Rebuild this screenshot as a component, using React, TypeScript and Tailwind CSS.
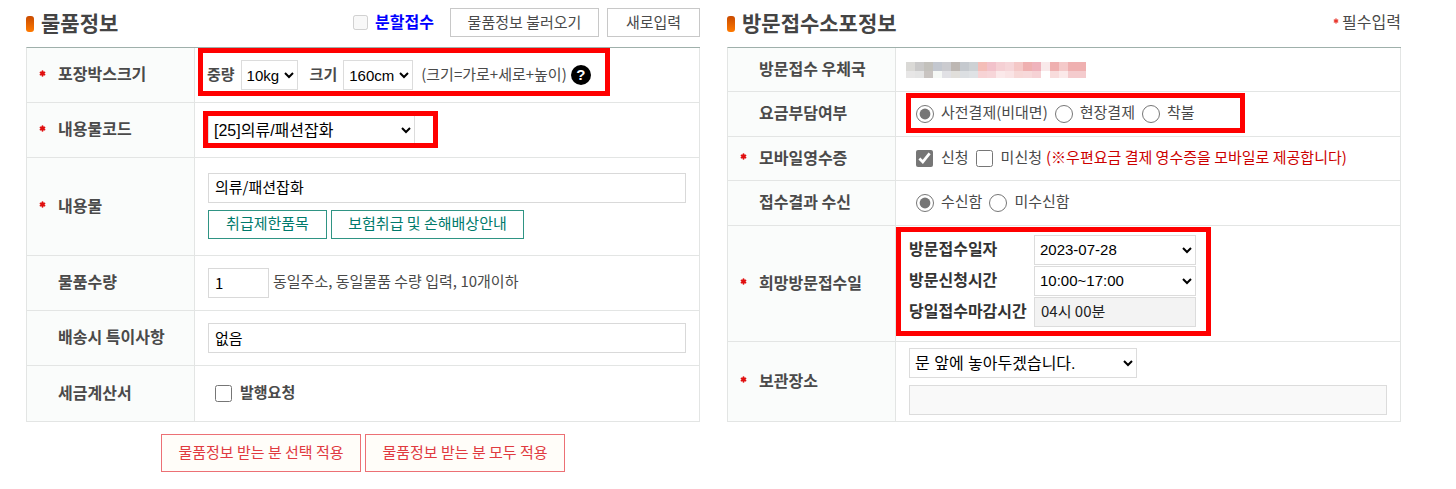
import type { ReactNode } from "react";
import { Asterisk } from "lucide-react";
import clsx from "clsx";

const FIELD =
  "h-[30px] border border-[#d9d9d9] bg-white px-1.5 pb-0.5 text-[15px] text-black";
const SELECT =
  "h-[30px] border border-[#dcdcdc] bg-white pl-px font-['Liberation_Sans','Noto_Sans_CJK_KR',sans-serif] text-black";

// 모자이크 처리된 우체국 이름
const MOSAIC = [
  ["#dad9d6", "#e7e6e6"],
  ["#cac9c9", "#e4e4e4"],
  ["#c3c1bc", "#c9c4c1"],
  ["#c3c7cf", "#f5f8f5"],
  ["#cbcbcf", "#e1e1e5"],
  ["#bdb7b3", "#e1dfdb"],
  ["#c5c9ce", "#dcdfe2"],
  ["#cdd1d4", "#dfe2e5"],
  ["#f4beb8", "#f7d3d5"],
  ["#f2c2cb", "#f7d6d9"],
  ["#f5d0d4", "#fbe9ea"],
  ["#f6d6d9", "#fae4e5"],
  ["#f4c8c7", "#f7d8d7"],
  ["#efb0b0", "#f7d9da"],
  ["#efb3bc", "#f6d2d5"],
  ["#f9e9ea", "#ffffff"],
  ["#efb0b0", "#f8dcdc"],
  ["#f4c9c9", "#fbe9e9"],
  ["#efb0b0", "#f4cbcd"],
  ["#efb0b0", "#f4cbcd"],
];

function RequiredMark() {
  return (
    <Asterisk
      aria-label="필수"
      strokeWidth={5}
      className="size-[9px] shrink-0 text-[#e01010]"
    />
  );
}

/** 강조용 빨간 테두리. 셀 위에 겹쳐서 그린다. */
function Highlight({ className }: { className: string }) {
  return (
    <span
      aria-hidden="true"
      className={clsx(
        "pointer-events-none absolute border-[5px] border-[#ff0000]",
        className,
      )}
    />
  );
}

function SectionTitle({ children }: { children: ReactNode }) {
  return (
    <h2 className="flex items-center gap-[7px] text-[21px] leading-7 font-bold text-[#444]">
      <span className="mt-0.5 h-4 w-2 rounded-[3px] bg-linear-to-b from-[#c94a00] to-[#ff7a00]" />
      <span className="pb-0.5">{children}</span>
    </h2>
  );
}

function FormTable({ label, children }: { label: string; children: ReactNode }) {
  return (
    <table
      aria-label={label}
      className="w-full table-fixed border-separate border-spacing-0 border-t border-l border-t-[#9fb0ab] border-l-[#e3e5e4]"
    >
      <tbody>{children}</tbody>
    </table>
  );
}

function Row({
  label,
  required,
  height,
  children,
}: {
  label: string;
  required?: boolean;
  height: string;
  children: ReactNode;
}) {
  return (
    <tr className={height}>
      <th
        scope="row"
        className="w-[168px] border-r border-b border-[#e3e5e4] bg-[#fafcfb] py-0 pr-0 pl-[11px] text-left align-middle text-base leading-5 font-bold text-[#4a4a4a]"
      >
        <span className="flex items-center pb-1">
          <span className="flex w-5 shrink-0">
            {required && <RequiredMark />}
          </span>
          {label}
        </span>
      </th>
      <td className="relative border-r border-b border-[#e3e5e4] px-[13px] py-0 align-middle">
        {children}
      </td>
    </tr>
  );
}

function Choice({
  type,
  name,
  checked,
  bold,
  children,
}: {
  type: "radio" | "checkbox";
  name: string;
  checked?: boolean;
  bold?: boolean;
  children: ReactNode;
}) {
  return (
    <label className="flex items-center gap-[7px]">
      <input
        type={type}
        name={name}
        defaultChecked={checked}
        className={clsx(
          "accent-[#767676]",
          type === "radio" ? "size-[18px]" : "mr-px size-[17px]",
        )}
      />
      <span className={clsx("pb-1", bold && "font-bold")}>{children}</span>
    </label>
  );
}

function ItemSection() {
  return (
    <section>
      <header className="flex h-[47px] items-center justify-between pb-0.5">
        <SectionTitle>물품정보</SectionTitle>
        <div className="flex items-center gap-2">
          <label className="mr-2 flex items-center gap-[7px] text-base leading-5 font-bold text-[#0000ff]">
            <input type="checkbox" disabled className="size-[15px]" />
            <span className="pb-1">분할접수</span>
          </label>
          <button
            type="button"
            className="h-[29px] w-[149px] border border-[#c8c8c8] bg-white pb-0.5"
          >
            물품정보 불러오기
          </button>
          <button
            type="button"
            className="h-[29px] w-[93px] border border-[#c8c8c8] bg-white pb-0.5"
          >
            새로입력
          </button>
        </div>
      </header>

      <FormTable label="물품정보">
        <Row label="포장박스크기" required height="h-[55px]">
          <div className="flex items-center">
            <label htmlFor="weight" className="-ml-px mr-1.5 pb-0.5 font-bold">
              중량
            </label>
            <select id="weight" className={clsx(SELECT, "w-[57px] text-[15px]")}>
              <option>10kg</option>
            </select>
            <label htmlFor="size" className="mr-1.5 ml-3 pb-0.5 font-bold">
              크기
            </label>
            <select id="size" className={clsx(SELECT, "w-[70px] text-[15px]")}>
              <option>160cm</option>
            </select>
            <span className="mr-1 ml-2 pb-0.5">(크기=가로+세로+높이)</span>
            <button
              type="button"
              aria-label="크기 도움말"
              className="size-5 rounded-full bg-black font-['Liberation_Sans',sans-serif] text-[15px] leading-5 font-bold text-white"
            >
              ?
            </button>
          </div>
          <Highlight className="top-0 left-[3px] h-12 w-[412px]" />
        </Row>

        <Row label="내용물코드" required height="h-[55px]">
          <select
            aria-label="내용물코드"
            className={clsx(SELECT, "block w-[207px] text-base")}
          >
            <option>[25]의류/패션잡화</option>
          </select>
          <Highlight className="top-2 left-2 h-[37px] w-[235px]" />
        </Row>

        <Row label="내용물" required height="h-[98px]">
          <div className="flex flex-col gap-[7px] pb-0.5">
            <input
              aria-label="내용물"
              defaultValue="의류/패션잡화"
              className={clsx(FIELD, "w-full")}
            />
            <div className="flex gap-1 text-[#007a6c]">
              <button
                type="button"
                className="h-[29px] w-[119px] border border-[#2f9484] bg-white pb-0.5"
              >
                취급제한품목
              </button>
              <button
                type="button"
                className="h-[29px] w-[193px] border border-[#2f9484] bg-white pb-0.5"
              >
                보험취급 및 손해배상안내
              </button>
            </div>
          </div>
        </Row>

        <Row label="물품수량" height="h-[55px]">
          <div className="flex items-center gap-1">
            <input
              id="quantity"
              aria-label="물품수량"
              defaultValue="1"
              className={clsx(FIELD, "w-[61px]")}
            />
            <label htmlFor="quantity" className="pb-1">
              동일주소, 동일물품 수량 입력, 10개이하
            </label>
          </div>
        </Row>

        <Row label="배송시 특이사항" height="h-[55px]">
          <input
            aria-label="배송시 특이사항"
            defaultValue="없음"
            className={clsx(FIELD, "block w-full")}
          />
        </Row>

        <Row label="세금계산서" height="h-[56px]">
          <div className="flex pl-[7px]">
            <Choice type="checkbox" name="invoice" bold>
              발행요청
            </Choice>
          </div>
        </Row>
      </FormTable>

      <div className="mt-3 flex justify-center gap-1 text-[#e03a40]">
        <button
          type="button"
          className="h-[38px] w-[200px] border border-[#ec7075] bg-[#fffdf9] pb-0.5"
        >
          물품정보 받는 분 선택 적용
        </button>
        <button
          type="button"
          className="h-[38px] w-[200px] border border-[#ec7075] bg-[#fffdf9] pb-0.5"
        >
          물품정보 받는 분 모두 적용
        </button>
      </div>
    </section>
  );
}

function VisitSection() {
  return (
    <section>
      <header className="flex h-[47px] items-center justify-between pb-0.5">
        <SectionTitle>방문접수소포정보</SectionTitle>
        <p className="flex items-center gap-0.5 pb-1 text-base leading-5">
          <Asterisk
            aria-hidden="true"
            strokeWidth={4}
            className="size-2 text-[#e8352b]"
          />
          필수입력
        </p>
      </header>

      <FormTable label="방문접수소포정보">
        <Row label="방문접수 우체국" height="h-[44px]">
          <div className="-ml-[3px] flex">
            {MOSAIC.map(([top, bottom], i) => (
              <span key={i} className="flex w-[9px] flex-col">
                <span className="h-[9px]" style={{ background: top }} />
                <span className="h-[7px]" style={{ background: bottom }} />
              </span>
            ))}
          </div>
        </Row>

        <Row label="요금부담여부" height="h-[45px]">
          <div className="flex gap-[7px] pl-[7px]">
            <Choice type="radio" name="payment" checked>
              사전결제(비대면)
            </Choice>
            <Choice type="radio" name="payment">
              현장결제
            </Choice>
            <Choice type="radio" name="payment">
              착불
            </Choice>
          </div>
          <Highlight className="top-px left-2.5 h-10 w-[339px]" />
        </Row>

        <Row label="모바일영수증" required height="h-[44px]">
          <div className="flex items-center pl-[7px]">
            <div className="flex gap-[7px]">
              <Choice type="checkbox" name="receipt" checked>
                신청
              </Choice>
              <Choice type="checkbox" name="no-receipt">
                미신청
              </Choice>
            </div>
            <span className="ml-1 pb-1 text-[#cc0000]">
              (※우편요금 결제 영수증을 모바일로 제공합니다)
            </span>
          </div>
        </Row>

        <Row label="접수결과 수신" height="h-[45px]">
          <div className="flex gap-[7px] pl-[7px]">
            <Choice type="radio" name="result" checked>
              수신함
            </Choice>
            <Choice type="radio" name="result">
              미수신함
            </Choice>
          </div>
        </Row>

        <Row label="희망방문접수일" required height="h-[116px]">
          <div className="grid grid-cols-[125px_162px] items-center gap-y-px pb-1.5 text-base leading-5 font-bold text-[#333]">
            <label htmlFor="visit-date" className="pb-1">
              방문접수일자
            </label>
            <select
              id="visit-date"
              className={clsx(SELECT, "text-[15px] font-normal")}
            >
              <option>2023-07-28</option>
            </select>
            <label htmlFor="visit-time" className="pb-1">
              방문신청시간
            </label>
            <select
              id="visit-time"
              className={clsx(SELECT, "text-[15px] font-normal")}
            >
              <option>10:00~17:00</option>
            </select>
            <label htmlFor="deadline" className="pb-1">
              당일접수마감시간
            </label>
            <input
              id="deadline"
              readOnly
              defaultValue="04시 00분"
              className="h-[30px] border border-[#dcdcdc] bg-[#f3f3f3] px-1.5 pb-0.5 text-[15px] font-normal text-[#222]"
            />
          </div>
          <Highlight className="top-px left-0 h-[109px] w-[315px]" />
        </Row>

        <Row label="보관장소" required height="h-[80px]">
          <div className="flex flex-col gap-[7px]">
            <select
              aria-label="보관장소"
              className={clsx(SELECT, "w-[228px] text-base")}
            >
              <option>문 앞에 놓아두겠습니다.</option>
            </select>
            <input
              aria-label="보관장소 상세"
              disabled
              className="h-[30px] w-full border border-[#dcdcdc] bg-[#f9f9f9] px-1.5"
            />
          </div>
        </Row>
      </FormTable>
    </section>
  );
}

export default function App() {
  return (
    <main className="grid grid-cols-2 gap-[27px] bg-white pr-[55px] pb-4 pl-[26px] font-['Noto_Sans_CJK_KR',sans-serif] text-[15px] leading-5 text-[#4a4a4a]">
      <ItemSection />
      <VisitSection />
    </main>
  );
}
